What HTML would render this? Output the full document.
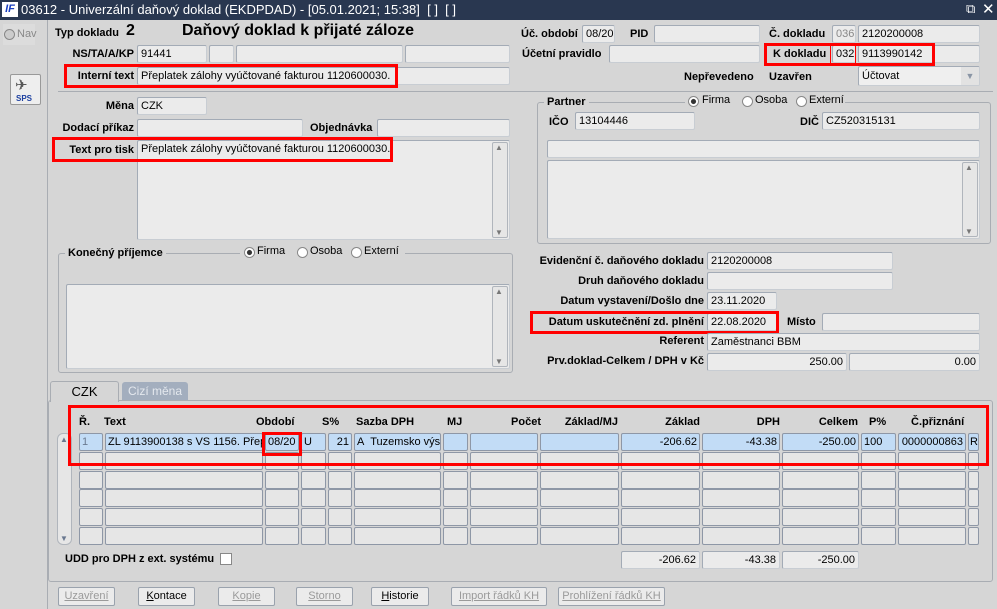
<!DOCTYPE html>
<html><head><meta charset="utf-8"><style>
*{box-sizing:border-box;margin:0;padding:0}
html,body{width:997px;height:609px;overflow:hidden}
body{background:#d6d6d6;font-family:"Liberation Sans",Arial,sans-serif;font-size:11px;color:#000;position:relative}
div,span{position:absolute;white-space:nowrap}
.l{font-weight:bold;line-height:18px}
.r{text-align:right}
.f{background:#ebebeb;border:1px solid #a3abb6;border-right-color:#c8cdd3;border-bottom-color:#c8cdd3;border-radius:2px;line-height:16px;padding-left:3px;overflow:hidden;height:18px}
.n{text-align:right;padding-right:3px}
.rb{border:3px solid #f00}
.b{background:#ebebeb;border:1px solid #9aa2ad;border-radius:2px;text-align:center;line-height:17px;height:19px;color:#9a9a9a;text-decoration:underline}
.b.a{color:#000}
.g{border:1px solid #a9adb3;border-radius:3px}
.c{height:18px;background:#e6e6e6;border:1px solid #8e97a6;border-radius:2px;line-height:16px;padding:0 2px;overflow:hidden}
.s{background:#c2dcf6}
.sb{background:#e6e6e6;border:1px solid #b0b5bc;border-radius:2px}
.rad{width:11px;height:11px;border-radius:50%;background:#fff;border:1px solid #888}
</style></head><body>
<div style="left:0;top:0;width:997px;height:20px;background:#293750"></div>
<div style="left:2px;top:2px;width:16px;height:15px;background:#fff;color:#1a3fc0;font-weight:bold;font-style:italic;font-size:11px;line-height:15px;text-align:center">IF</div>
<div style="left:21px;top:2px;color:#fff;font-size:13px;line-height:16px">03612 - Univerzální daňový doklad (EKDPDAD) - [05.01.2021; 15:38] &nbsp;[ ] &nbsp;[ ]</div>
<div style="left:966px;top:1px;color:#fff;font-size:13px">⧉</div>
<div style="left:982px;top:0px;color:#fff;font-size:15px">✕</div>
<div style="left:47px;top:20px;width:1px;height:589px;background:#a9adb3"></div>
<div style="left:3px;top:24px;width:32px;height:21px;background:#dcdcdc;color:#888;line-height:21px"><span class="rad" style="left:1px;top:5px;background:#ccc"></span><span style="left:14px;top:0">Nav</span></div>
<div style="left:10px;top:74px;width:31px;height:31px;background:#eee;border:1px solid #999;border-radius:2px;text-align:center"><span style="left:4px;top:1px;font-size:15px;color:#555">✈</span><span style="left:5px;top:19px;font-size:8px;color:#1b3fa0;font-weight:bold">SPS</span></div>

<div class="l" style="left:55px;top:24px">Typ dokladu</div>
<div class="l" style="left:126px;top:22px;font-size:16px">2</div>
<div class="l" style="left:182px;top:22px;font-size:16px">Daňový doklad k přijaté záloze</div>
<div class="l" style="left:521px;top:25px">Úč. období</div>
<div class="f" style="left:582px;top:25px;width:33px">08/20</div>
<div class="l" style="left:630px;top:25px">PID</div>
<div class="f" style="left:654px;top:25px;width:106px"></div>
<div class="l" style="left:769px;top:25px">Č. dokladu</div>
<div class="f" style="left:832px;top:25px;width:24px;color:#888">036</div>
<div class="f" style="left:858px;top:25px;width:122px">2120200008</div>
<div class="l r" style="left:55px;top:45px;width:79px">NS/TA/A/KP</div>
<div class="f" style="left:137px;top:45px;width:70px">91441</div>
<div class="f" style="left:209px;top:45px;width:25px"></div>
<div class="f" style="left:236px;top:45px;width:167px"></div>
<div class="f" style="left:405px;top:45px;width:105px"></div>
<div class="l" style="left:522px;top:45px">Účetní pravidlo</div>
<div class="f" style="left:609px;top:45px;width:151px"></div>
<div class="l" style="left:773px;top:45px">K dokladu</div>
<div class="f" style="left:832px;top:45px;width:24px">032</div>
<div class="f" style="left:858px;top:45px;width:122px">9113990142</div>
<div class="rb" style="left:764px;top:43px;width:171px;height:23px"></div>
<div style="left:830px;top:45px;width:1px;height:19px;background:#f00"></div>
<div style="left:855px;top:45px;width:1px;height:19px;background:#f00"></div>
<div class="l r" style="left:55px;top:67px;width:79px">Interní text</div>
<div class="f" style="left:137px;top:67px;width:373px">Přeplatek zálohy vyúčtované fakturou 1120600030.</div>
<div class="rb" style="left:64px;top:64px;width:334px;height:24px"></div>
<div class="l" style="left:684px;top:68px">Nepřevedeno</div>
<div class="l" style="left:769px;top:68px">Uzavřen</div>
<div class="f" style="left:858px;top:66px;width:122px;height:20px;line-height:18px;background:#efefef">Účtovat<span style="right:0;top:0;width:18px;height:18px;background:#e2e2e2;color:#8a95a5;font-size:9px;text-align:center">▼</span></div>
<div style="left:58px;top:91px;width:935px;height:1px;background:#a9adb3"></div>

<div class="l r" style="left:55px;top:97px;width:79px">Měna</div>
<div class="f" style="left:137px;top:97px;width:70px">CZK</div>
<div class="l r" style="left:55px;top:119px;width:79px">Dodací příkaz</div>
<div class="f" style="left:137px;top:119px;width:166px"></div>
<div class="l" style="left:310px;top:119px">Objednávka</div>
<div class="f" style="left:377px;top:119px;width:133px"></div>
<div class="l r" style="left:55px;top:141px;width:79px">Text pro tisk</div>
<div class="f" style="left:137px;top:140px;width:373px;height:100px">Přeplatek zálohy vyúčtované fakturou 1120600030.</div>
<div class="sb" style="left:492px;top:142px;width:16px;height:96px"><span style="left:2px;top:0;font-size:8px;color:#777">▲</span><span style="left:2px;bottom:0;font-size:8px;color:#777">▼</span></div>
<div class="rb" style="left:52px;top:137px;width:341px;height:25px"></div>

<div class="g" style="left:537px;top:102px;width:454px;height:142px"></div>
<div class="l" style="left:544px;top:93px;background:#d6d6d6;padding:0 3px">Partner</div>
<div style="left:685px;top:93px;background:#d6d6d6;width:160px;height:16px"></div>
<span class="rad" style="left:688px;top:96px;background:radial-gradient(#333 35%,#fff 45%)"></span><span style="left:702px;top:94px">Firma</span>
<span class="rad" style="left:742px;top:96px"></span><span style="left:755px;top:94px">Osoba</span>
<span class="rad" style="left:796px;top:96px"></span><span style="left:809px;top:94px">Externí</span>
<div class="l" style="left:549px;top:113px">IČO</div>
<div class="f" style="left:575px;top:112px;width:120px">13104446</div>
<div class="l" style="left:800px;top:113px">DIČ</div>
<div class="f" style="left:822px;top:112px;width:158px">CZ520315131</div>
<div class="f" style="left:547px;top:140px;width:433px"></div>
<div class="f" style="left:547px;top:160px;width:433px;height:79px"></div>
<div class="sb" style="left:962px;top:162px;width:16px;height:75px"><span style="left:2px;top:0;font-size:8px;color:#777">▲</span><span style="left:2px;bottom:0;font-size:8px;color:#777">▼</span></div>

<div class="g" style="left:58px;top:253px;width:455px;height:120px"></div>
<div class="l" style="left:65px;top:244px;background:#d6d6d6;padding:0 3px">Konečný příjemce</div>
<div style="left:240px;top:245px;background:#d6d6d6;width:165px;height:16px"></div>
<span class="rad" style="left:244px;top:247px;background:radial-gradient(#333 35%,#fff 45%)"></span><span style="left:257px;top:245px">Firma</span>
<span class="rad" style="left:297px;top:247px"></span><span style="left:310px;top:245px">Osoba</span>
<span class="rad" style="left:351px;top:247px"></span><span style="left:364px;top:245px">Externí</span>
<div class="f" style="left:66px;top:284px;width:444px;height:85px"></div>
<div class="sb" style="left:492px;top:286px;width:16px;height:81px"><span style="left:2px;top:0;font-size:8px;color:#777">▲</span><span style="left:2px;bottom:0;font-size:8px;color:#777">▼</span></div>

<div class="l r" style="left:520px;top:252px;width:184px">Evidenční č. daňového dokladu</div>
<div class="f" style="left:707px;top:252px;width:186px">2120200008</div>
<div class="l r" style="left:520px;top:272px;width:184px">Druh daňového dokladu</div>
<div class="f" style="left:707px;top:272px;width:186px"></div>
<div class="l r" style="left:520px;top:292px;width:184px">Datum vystavení/Došlo dne</div>
<div class="f" style="left:707px;top:292px;width:70px">23.11.2020</div>
<div class="l r" style="left:520px;top:313px;width:184px">Datum uskutečnění zd. plnění</div>
<div class="f" style="left:707px;top:313px;width:70px">22.08.2020</div>
<div class="rb" style="left:530px;top:311px;width:249px;height:23px"></div>
<div class="l" style="left:787px;top:313px">Místo</div>
<div class="f" style="left:822px;top:313px;width:158px"></div>
<div class="l r" style="left:520px;top:332px;width:184px">Referent</div>
<div class="f" style="left:707px;top:333px;width:273px">Zaměstnanci BBM</div>
<div class="l r" style="left:520px;top:352px;width:184px">Prv.doklad-Celkem / DPH v Kč</div>
<div class="f n" style="left:707px;top:353px;width:140px">250.00</div>
<div class="f n" style="left:849px;top:353px;width:131px">0.00</div>

<div style="left:48px;top:400px;width:945px;height:182px;border:1px solid #a9adb3;border-radius:3px"></div>
<div style="left:50px;top:381px;width:69px;height:21px;background:#d6d6d6;border:1px solid #a9adb3;border-bottom:none;border-radius:3px 3px 0 0;text-align:center;line-height:19px;font-size:13px">CZK</div>
<div style="left:122px;top:382px;width:66px;height:18px;background:#a3aebe;border-radius:3px 3px 0 0;text-align:center;line-height:18px;font-size:12px;color:#e4e8ee">Cizí měna</div>

<div class="l" style="left:79px;top:413px">Ř.</div>
<div class="l" style="left:104px;top:413px">Text</div>
<div class="l" style="left:256px;top:413px">Období</div>
<div class="l" style="left:322px;top:413px">S%</div>
<div class="l" style="left:356px;top:413px">Sazba DPH</div>
<div class="l" style="left:447px;top:413px">MJ</div>
<div class="l r" style="left:470px;top:413px;width:71px">Počet</div>
<div class="l r" style="left:540px;top:413px;width:78px">Základ/MJ</div>
<div class="l r" style="left:621px;top:413px;width:79px">Základ</div>
<div class="l r" style="left:702px;top:413px;width:78px">DPH</div>
<div class="l r" style="left:782px;top:413px;width:76px">Celkem</div>
<div class="l" style="left:869px;top:413px">P%</div>
<div class="l" style="left:911px;top:413px">Č.přiznání</div>

<div class="c s" style="left:79px;top:433px;width:24px;color:#6a7a90">1</div>
<div class="c s" style="left:105px;top:433px;width:158px">ZL 9113900138 s VS 1156. Přep</div>
<div class="c s" style="left:265px;top:433px;width:34px">08/20</div>
<div class="c s" style="left:301px;top:433px;width:25px">U</div>
<div class="c s n" style="left:328px;top:433px;width:24px">21</div>
<div class="c s" style="left:354px;top:433px;width:87px">A&nbsp; Tuzemsko výs</div>
<div class="c s" style="left:443px;top:433px;width:25px"></div>
<div class="c s" style="left:470px;top:433px;width:68px"></div>
<div class="c s" style="left:540px;top:433px;width:79px"></div>
<div class="c s n" style="left:621px;top:433px;width:79px">-206.62</div>
<div class="c s n" style="left:702px;top:433px;width:78px">-43.38</div>
<div class="c s n" style="left:782px;top:433px;width:77px">-250.00</div>
<div class="c s" style="left:861px;top:433px;width:35px">100</div>
<div class="c s n" style="left:898px;top:433px;width:68px">0000000863</div>
<div class="c s" style="left:968px;top:433px;width:11px;padding:0 1px">R</div>

<div class="c" style="left:79px;top:452px;width:24px"></div><div class="c" style="left:105px;top:452px;width:158px"></div><div class="c" style="left:265px;top:452px;width:34px"></div><div class="c" style="left:301px;top:452px;width:25px"></div><div class="c" style="left:328px;top:452px;width:24px"></div><div class="c" style="left:354px;top:452px;width:87px"></div><div class="c" style="left:443px;top:452px;width:25px"></div><div class="c" style="left:470px;top:452px;width:68px"></div><div class="c" style="left:540px;top:452px;width:79px"></div><div class="c" style="left:621px;top:452px;width:79px"></div><div class="c" style="left:702px;top:452px;width:78px"></div><div class="c" style="left:782px;top:452px;width:77px"></div><div class="c" style="left:861px;top:452px;width:35px"></div><div class="c" style="left:898px;top:452px;width:68px"></div><div class="c" style="left:968px;top:452px;width:11px"></div>
<div class="c" style="left:79px;top:471px;width:24px"></div><div class="c" style="left:105px;top:471px;width:158px"></div><div class="c" style="left:265px;top:471px;width:34px"></div><div class="c" style="left:301px;top:471px;width:25px"></div><div class="c" style="left:328px;top:471px;width:24px"></div><div class="c" style="left:354px;top:471px;width:87px"></div><div class="c" style="left:443px;top:471px;width:25px"></div><div class="c" style="left:470px;top:471px;width:68px"></div><div class="c" style="left:540px;top:471px;width:79px"></div><div class="c" style="left:621px;top:471px;width:79px"></div><div class="c" style="left:702px;top:471px;width:78px"></div><div class="c" style="left:782px;top:471px;width:77px"></div><div class="c" style="left:861px;top:471px;width:35px"></div><div class="c" style="left:898px;top:471px;width:68px"></div><div class="c" style="left:968px;top:471px;width:11px"></div>
<div class="c" style="left:79px;top:489px;width:24px"></div><div class="c" style="left:105px;top:489px;width:158px"></div><div class="c" style="left:265px;top:489px;width:34px"></div><div class="c" style="left:301px;top:489px;width:25px"></div><div class="c" style="left:328px;top:489px;width:24px"></div><div class="c" style="left:354px;top:489px;width:87px"></div><div class="c" style="left:443px;top:489px;width:25px"></div><div class="c" style="left:470px;top:489px;width:68px"></div><div class="c" style="left:540px;top:489px;width:79px"></div><div class="c" style="left:621px;top:489px;width:79px"></div><div class="c" style="left:702px;top:489px;width:78px"></div><div class="c" style="left:782px;top:489px;width:77px"></div><div class="c" style="left:861px;top:489px;width:35px"></div><div class="c" style="left:898px;top:489px;width:68px"></div><div class="c" style="left:968px;top:489px;width:11px"></div>
<div class="c" style="left:79px;top:508px;width:24px"></div><div class="c" style="left:105px;top:508px;width:158px"></div><div class="c" style="left:265px;top:508px;width:34px"></div><div class="c" style="left:301px;top:508px;width:25px"></div><div class="c" style="left:328px;top:508px;width:24px"></div><div class="c" style="left:354px;top:508px;width:87px"></div><div class="c" style="left:443px;top:508px;width:25px"></div><div class="c" style="left:470px;top:508px;width:68px"></div><div class="c" style="left:540px;top:508px;width:79px"></div><div class="c" style="left:621px;top:508px;width:79px"></div><div class="c" style="left:702px;top:508px;width:78px"></div><div class="c" style="left:782px;top:508px;width:77px"></div><div class="c" style="left:861px;top:508px;width:35px"></div><div class="c" style="left:898px;top:508px;width:68px"></div><div class="c" style="left:968px;top:508px;width:11px"></div>
<div class="c" style="left:79px;top:527px;width:24px"></div><div class="c" style="left:105px;top:527px;width:158px"></div><div class="c" style="left:265px;top:527px;width:34px"></div><div class="c" style="left:301px;top:527px;width:25px"></div><div class="c" style="left:328px;top:527px;width:24px"></div><div class="c" style="left:354px;top:527px;width:87px"></div><div class="c" style="left:443px;top:527px;width:25px"></div><div class="c" style="left:470px;top:527px;width:68px"></div><div class="c" style="left:540px;top:527px;width:79px"></div><div class="c" style="left:621px;top:527px;width:79px"></div><div class="c" style="left:702px;top:527px;width:78px"></div><div class="c" style="left:782px;top:527px;width:77px"></div><div class="c" style="left:861px;top:527px;width:35px"></div><div class="c" style="left:898px;top:527px;width:68px"></div><div class="c" style="left:968px;top:527px;width:11px"></div>
<div class="sb" style="left:57px;top:433px;width:15px;height:112px;border-radius:6px"><span style="left:2px;top:1px;font-size:8px;color:#6a7890">▲</span><span style="left:2px;bottom:1px;font-size:8px;color:#6a7890">▼</span></div>
<div class="rb" style="left:68px;top:405px;width:921px;height:61px"></div>
<div class="rb" style="left:262px;top:432px;width:40px;height:24px"></div>

<div class="l" style="left:65px;top:550px">UDD pro DPH z ext. systému</div>
<div style="left:220px;top:553px;width:12px;height:12px;background:#fff;border:1px solid #888"></div>
<div class="f n" style="left:621px;top:551px;width:79px">-206.62</div>
<div class="f n" style="left:702px;top:551px;width:78px">-43.38</div>
<div class="f n" style="left:782px;top:551px;width:77px">-250.00</div>

<div class="b" style="left:58px;top:587px;width:57px">Uzavření</div>
<div class="b a" style="left:138px;top:587px;width:57px;text-decoration:none"><u>K</u>ontace</div>
<div class="b" style="left:218px;top:587px;width:57px">Kopie</div>
<div class="b" style="left:296px;top:587px;width:57px">Storno</div>
<div class="b a" style="left:371px;top:587px;width:58px;text-decoration:none"><u>H</u>istorie</div>
<div class="b" style="left:451px;top:587px;width:96px">Import řádků KH</div>
<div class="b" style="left:558px;top:587px;width:107px">Prohlížení řádků KH</div>
</body></html>
